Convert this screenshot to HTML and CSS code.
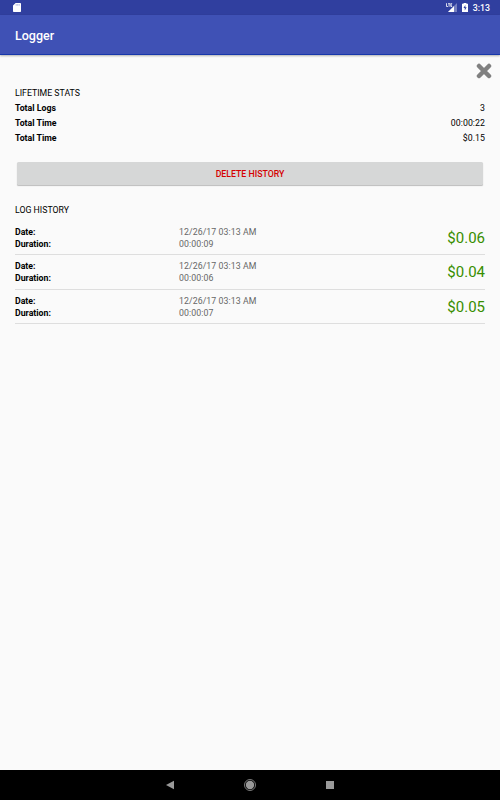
FILE: index.html
```html
<!DOCTYPE html>
<html lang="en">
<head>
<meta charset="utf-8">
<title>Logger</title>
<link rel="stylesheet" href="styles.css">
</head>
<body>
<div class="status">
  <svg class="sd" width="8" height="9" viewBox="0 0 8 9"><path d="M2.6 0H7.3Q8 0 8 .7V8.3Q8 9 7.3 9H.7Q0 9 0 8.3V2.6Z" fill="#fff"/><path d="M3.2 1.2v1.4M4.7 1.2v1.4M6.2 1.2v1.4" stroke="#303f9f" stroke-width=".4"/></svg>
  <div class="indicators">
    <svg width="12" height="10" viewBox="0 0 12 10"><path d="M11 0V9H2Z" fill="#7680c0"/><path d="M8 3V9H2Z" fill="#fff"/><path d="M0 0H6.5V4.3H0Z" fill="#303f9f"/><path d="M.5 .2V3.5H2M2 .7H4.3M3.1 .7V3.8M6.2 .7H4.8V3.5H6.2M4.8 2.1H6" stroke="#fff" stroke-width=".8" fill="none"/></svg>
    <svg width="6" height="9" viewBox="0 0 5 9" preserveAspectRatio="none"><path d="M1.3 0H3.7V.8H5V9H0V.8H1.3Z" fill="#fff"/><path d="M2.8 2L1.2 5H2.3V7.5L3.9 4.3H2.8Z" fill="#303f9f"/></svg>
    <span class="clock">3:13</span>
  </div>
</div>
<header class="appbar">Logger</header>
<main class="content">
  <div class="close"><svg width="16" height="16" viewBox="0 0 16 16"><path d="M3 3L13 13M13 3L3 13" stroke="#808080" stroke-width="4.5" stroke-linecap="round"/></svg></div>
  <h2 class="heading">LIFETIME STATS</h2>
  <div class="stat"><b>Total Logs</b><span>3</span></div>
  <div class="stat"><b>Total Time</b><span>00:00:22</span></div>
  <div class="stat"><b>Total Time</b><span>$0.15</span></div>
  <button class="delete">DELETE HISTORY</button>
  <h2 class="heading">LOG HISTORY</h2>
  <div class="logs">
    <div class="log"><div class="labels">Date:<br>Duration:</div><div class="values">12/26/17 03:13 AM<br>00:00:09</div><div class="cost">$0.06</div></div>
    <div class="log"><div class="labels">Date:<br>Duration:</div><div class="values">12/26/17 03:13 AM<br>00:00:06</div><div class="cost">$0.04</div></div>
    <div class="log"><div class="labels">Date:<br>Duration:</div><div class="values">12/26/17 03:13 AM<br>00:00:07</div><div class="cost">$0.05</div></div>
  </div>
</main>
<nav class="navbar">
  <svg width="200" height="30" viewBox="0 0 200 30"><path d="M16 15L24 10.8V19.2Z" fill="#999"/><circle cx="100" cy="15" r="5.5" fill="none" stroke="#999" stroke-width=".8"/><circle cx="100" cy="15" r="4.2" fill="#999"/><path d="M176 11H184V19H176Z" fill="#999"/></svg>
</nav>
</body>
</html>
```
FILE: styles.css
```css
* { box-sizing: border-box; }
body {
  margin: 0;
  height: 800px;
  display: flex;
  flex-direction: column;
  background: #fafafa;
  color: #000;
  font: 8.75px/12px Roboto, sans-serif;
}
.status {
  height: 15px;
  flex: none;
  display: flex;
  align-items: flex-start;
  justify-content: space-between;
  padding: 3px 10px 0 13px;
  background: #303f9f;
}
.indicators { display: flex; gap: 4px; color: #fff; }
.clock {
  margin-left: 1px;
  font-size: 8.75px;
  line-height: 10px;
  font-weight: 500;
}
.appbar {
  height: 40px;
  flex: none;
  padding-left: 15px;
  background: #3f51b5;
  border-bottom: 1px solid #1737ab;
  box-shadow: 0 1px 2px rgba(0, 0, 0, .3);
  color: #fff;
  font-size: 12.5px;
  line-height: 41px;
  font-weight: 500;
}
.content { flex: 1; padding: 8px 15px 0; }
.close {
  height: 24px;
  display: flex;
  justify-content: flex-end;
  margin-right: -7px;
}
.heading {
  margin: 0;
  font-size: 8.75px;
  line-height: 12px;
  font-weight: 400;
}
.stat {
  height: 15px;
  display: flex;
  justify-content: space-between;
  line-height: 18px;
}
.stat b { font-weight: 700; }
.stat span { letter-spacing: .06px; }
.delete {
  display: block;
  width: 466px;
  height: 23px;
  margin: 18px 2px 19px;
  padding: 1px 0 0;
  border: 0;
  border-radius: 1.5px;
  background: #d6d7d7;
  box-shadow: 0 1px 1px rgba(0, 0, 0, .25);
  color: #d50000;
  font: 500 8.75px/22px Roboto, sans-serif;
}
.logs { padding-top: 5px; }
.log {
  height: 34.4px;
  display: grid;
  grid-template-columns: 164px 1fr auto;
  padding-top: 5px;
  border-bottom: 1px solid #dedede;
}
.labels { font-weight: 700; }
.values { color: #666; letter-spacing: .08px; }
.cost {
  color: #388e00;
  font-size: 15px;
  line-height: 24px;
}
.navbar {
  height: 30px;
  flex: none;
  display: flex;
  justify-content: center;
  background: #000;
}
```
